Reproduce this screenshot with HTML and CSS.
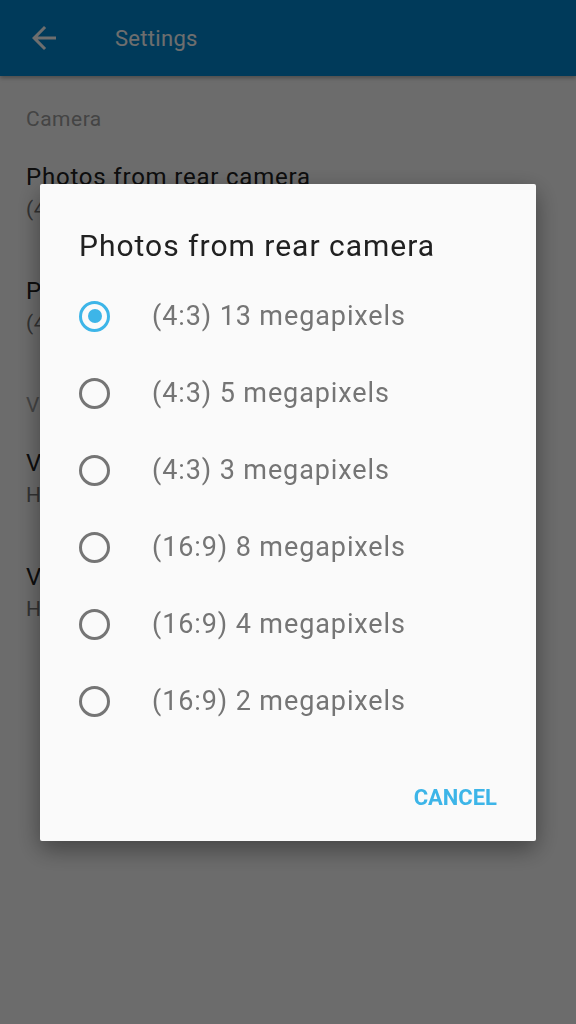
FILE: index.html
```html
<!DOCTYPE html>
<html lang="en">
<head>
    <meta charset="UTF-8">
    <meta name="viewport" content="width=device-width, initial-scale=1.0">
    <title>Settings</title>
    <link rel="stylesheet" href="styles.css">
</head>
<body>
    <div class="toolbar">
        <svg class="back" width="36" height="36" viewBox="0 0 24 24">
            <path d="M20 11H7.83l5.59-5.59L12 4l-8 8 8 8 1.41-1.41L7.83 13H20v-2z" fill="#ffffff"/>
        </svg>
        <span class="toolbar-title">Settings</span>
    </div>

    <div class="settings">
        <div class="category">Camera</div>
        <div class="pref">
            <div class="pref-title">Photos from rear camera</div>
            <div class="pref-summary">(4:3) 13 megapixels</div>
        </div>
        <div class="pref">
            <div class="pref-title">Photos from front camera</div>
            <div class="pref-summary">(4:3) 5 megapixels</div>
        </div>
        <div class="category">Video</div>
        <div class="pref">
            <div class="pref-title">Video from rear camera</div>
            <div class="pref-summary">HD 1080p</div>
        </div>
        <div class="pref">
            <div class="pref-title">Video from front camera</div>
            <div class="pref-summary">HD 720p</div>
        </div>
    </div>

    <!-- dimmed backdrop with the choice dialog -->
    <div class="scrim">
        <div class="dialog">
            <div class="dialog-title">Photos from rear camera</div>
            <div class="options">
                <label class="option"><span class="radio checked"></span>(4:3) 13 megapixels</label>
                <label class="option"><span class="radio"></span>(4:3) 5 megapixels</label>
                <label class="option"><span class="radio"></span>(4:3) 3 megapixels</label>
                <label class="option"><span class="radio"></span>(16:9) 8 megapixels</label>
                <label class="option"><span class="radio"></span>(16:9) 4 megapixels</label>
                <label class="option"><span class="radio"></span>(16:9) 2 megapixels</label>
            </div>
            <div class="actions">
                <button class="btn-cancel">CANCEL</button>
            </div>
        </div>
    </div>
</body>
</html>
```

FILE: styles.css
```css
body {
    margin: 0;
    padding: 0;
    background-color: #fafafa;
    font-family: Roboto, "Liberation Sans", sans-serif;
    width: 576px;
    height: 1024px;
    overflow: hidden;
}

.toolbar {
    height: 76px;
    background-color: #0288d1;
    display: flex;
    align-items: center;
    box-shadow: 0 2px 4px rgba(0, 0, 0, 0.3);
}

.back {
    margin-left: 26px;
}

.toolbar-title {
    margin-left: 53px;
    font-size: 22px;
    letter-spacing: 0.3px;
    color: #ffffff;
}

.settings {
    padding-top: 27px;
}

.category {
    padding-left: 26px;
    font-size: 21px;
    letter-spacing: 0.5px;
    line-height: 32px;
    color: #9e9e9e;
    margin-bottom: 26px;
}

.pref {
    padding-left: 26px;
    margin-bottom: 50px;
}

.pref-title {
    font-size: 24px;
    letter-spacing: 0.8px;
    line-height: 32px;
    color: #212121;
}

.pref-summary {
    font-size: 21px;
    letter-spacing: 0.6px;
    line-height: 32px;
    color: #757575;
}

.scrim {
    position: fixed;
    top: 0;
    left: 0;
    right: 0;
    bottom: 0;
    background-color: rgba(0, 0, 0, 0.57);
    display: flex;
    align-items: center;
    justify-content: center;
}

.dialog {
    width: 496px;
    background-color: #fafafa;
    border-radius: 2px;
    box-shadow: 0 8px 24px rgba(0, 0, 0, 0.4);
    padding: 46px 0 23px 0;
}

.dialog-title {
    padding-left: 39px;
    font-size: 30px;
    letter-spacing: 1px;
    line-height: 32px;
    color: #212121;
}

.options {
    margin-top: 16px;
}

.option {
    display: flex;
    align-items: center;
    height: 77px;
    padding-left: 39px;
    font-size: 27px;
    letter-spacing: 0.9px;
    color: #757575;
}

.radio {
    width: 25px;
    height: 25px;
    border: 3px solid #757575;
    border-radius: 50%;
    margin-right: 42px;
    flex: 0 0 auto;
    display: flex;
    align-items: center;
    justify-content: center;
}

.radio.checked {
    border-color: #3db5e8;
}

.radio.checked::after {
    content: "";
    width: 14px;
    height: 14px;
    border-radius: 50%;
    background-color: #3db5e8;
}

.actions {
    margin-top: 38px;
    display: flex;
    justify-content: flex-end;
    padding-right: 39px;
}

.btn-cancel {
    font-family: Roboto, "Liberation Sans", sans-serif;
    font-weight: bold;
    font-size: 22px;
    line-height: 40px;
    height: 40px;
    color: #3db5e8;
    background: none;
    border: none;
    padding: 0;
}
```
